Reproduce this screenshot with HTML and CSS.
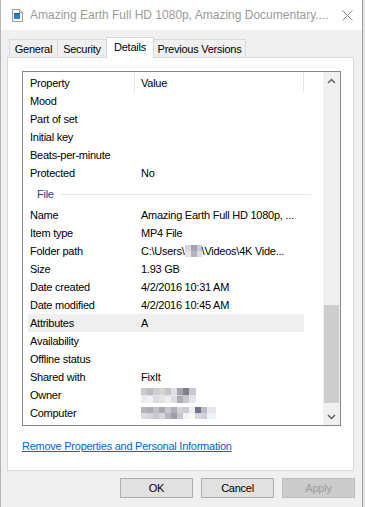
FILE: index.html
```html
<!DOCTYPE html>
<html lang="en">
<head>
  <meta charset="UTF-8" />
  <meta name="viewport" content="width=device-width, initial-scale=1.0"/>
  <title>Properties</title>
  <link rel="stylesheet" href="styles.css">
</head>
<body>

  <div class="window">

    <!-- Title bar -->
    <div class="titlebar">
      <svg class="file-icon" width="11" height="13" viewBox="0 0 11 13">
        <path d="M0.5 0.5 H7.5 L10.5 3.5 V12.5 H0.5 Z" fill="#fff" stroke="#9a9a9a"/>
        <path d="M7.5 0.5 V3.5 H10.5" fill="none" stroke="#9a9a9a"/>
        <rect x="2" y="4" width="6" height="6" fill="#2b7cd3"/>
        <rect x="2" y="4" width="6" height="1.5" fill="#1a5ea8"/>
      </svg>
      <span class="title-text">Amazing Earth Full HD 1080p, Amazing Documentary....</span>
      <svg class="close-icon" width="11" height="11" viewBox="0 0 11 11">
        <path d="M0.5 0.5 L10.5 10.5 M10.5 0.5 L0.5 10.5" stroke="#8a8a8a" stroke-width="1"/>
      </svg>
    </div>

    <div class="body-area">

      <!-- Tabs -->
      <div class="tabs">
        <div class="tab tab-general">General</div>
        <div class="tab tab-security">Security</div>
        <div class="tab tab-details active">Details</div>
        <div class="tab tab-prev">Previous Versions</div>
      </div>

      <!-- Tab page -->
      <div class="panel">
        <div class="listbox">
          <div class="list-content">
            <div class="list-header">
              <div class="hcell hcell-prop">Property</div>
              <div class="hcell hcell-value">Value</div>
            </div>

            <div class="row"><span class="prop">Mood</span><span class="val"></span></div>
            <div class="row"><span class="prop">Part of set</span><span class="val"></span></div>
            <div class="row"><span class="prop">Initial key</span><span class="val"></span></div>
            <div class="row"><span class="prop">Beats-per-minute</span><span class="val"></span></div>
            <div class="row"><span class="prop">Protected</span><span class="val">No</span></div>

            <div class="group-header">
              <span class="group-name">File</span>
              <span class="group-line"></span>
            </div>

            <div class="row"><span class="prop">Name</span><span class="val">Amazing Earth Full HD 1080p, ...</span></div>
            <div class="row"><span class="prop">Item type</span><span class="val">MP4 File</span></div>
            <div class="row"><span class="prop">Folder path</span><span class="val">C:\Users\<span class="blur blur-user"></span>\Videos\4K Vide...</span></div>
            <div class="row"><span class="prop">Size</span><span class="val">1.93 GB</span></div>
            <div class="row"><span class="prop">Date created</span><span class="val">4/2/2016 10:31 AM</span></div>
            <div class="row"><span class="prop">Date modified</span><span class="val">4/2/2016 10:45 AM</span></div>
            <div class="row hover"><span class="prop">Attributes</span><span class="val">A</span></div>
            <div class="row"><span class="prop">Availability</span><span class="val"></span></div>
            <div class="row"><span class="prop">Offline status</span><span class="val"></span></div>
            <div class="row"><span class="prop">Shared with</span><span class="val">FixIt</span></div>
            <div class="row"><span class="prop">Owner</span><span class="val"><span class="blur blur-owner"></span></span></div>
            <div class="row"><span class="prop">Computer</span><span class="val"><span class="blur blur-computer"></span></span></div>
          </div>

          <!-- Vertical scrollbar -->
          <div class="scrollbar">
            <div class="sb-button">
              <svg width="9" height="6" viewBox="0 0 9 6"><path d="M1 5 L4.5 1.5 L8 5" fill="none" stroke="#606060" stroke-width="1.5"/></svg>
            </div>
            <div class="sb-track">
              <div class="sb-thumb"></div>
            </div>
            <div class="sb-button">
              <svg width="9" height="6" viewBox="0 0 9 6"><path d="M1 1 L4.5 4.5 L8 1" fill="none" stroke="#606060" stroke-width="1.5"/></svg>
            </div>
          </div>
        </div>

        <a href="#" class="remove-link">Remove Properties and Personal Information</a>
      </div>

      <!-- Dialog buttons -->
      <div class="buttons">
        <button class="btn">OK</button>
        <button class="btn">Cancel</button>
        <button class="btn disabled">Apply</button>
      </div>

    </div>
  </div>

</body>
</html>
```

FILE: styles.css
```css
/* Whole page */
body {
  margin: 0;
  padding: 0;
  background-color: #e6e6e6;
  font-family: "Liberation Sans", Arial, sans-serif;
  font-size: 11px;
  letter-spacing: -0.25px;
  color: black;
}

/* Dialog window */
.window {
  width: 363px;
  height: 507px;
  box-sizing: border-box;
  border-left: 1px solid #b4b4b4;
  border-right: 1px solid #9c9c9c;
  background-color: #f0f0f0;
  display: flex;
  flex-direction: column;
}

/* Title bar */
.titlebar {
  height: 30px;
  background-color: white;
  display: flex;
  align-items: center;
  padding-left: 11px;
}

.file-icon {
  flex-shrink: 0;
}

.title-text {
  margin-left: 7px;
  font-size: 12px;
  color: #9a9a9a;
  white-space: nowrap;
  letter-spacing: 0;
}

.close-icon {
  margin-left: auto;
  margin-right: 9px;
  flex-shrink: 0;
}

/* Area below the title bar */
.body-area {
  padding-top: 7px;
}

/* Tabs */
.tabs {
  display: flex;
  align-items: flex-end;
  height: 20px;
  padding-left: 8px;
}

.tab {
  box-sizing: border-box;
  height: 18px;
  border: 1px solid #d9d9d9;
  border-bottom: none;
  margin-left: -1px;
  display: flex;
  align-items: center;
  justify-content: center;
  background-color: #f0f0f0;
}

.tab:first-child {
  margin-left: 0;
}

.tab-general { width: 49px; }
.tab-security { width: 50px; }
.tab-details { width: 48px; }
.tab-prev { width: 93px; }

.tab.active {
  height: 21px;
  margin-bottom: -1px;
  background-color: white;
  position: relative;
  padding-bottom: 2px;
}

/* Tab page */
.panel {
  margin-left: 6px;
  width: 347px;
  height: 414px;
  box-sizing: border-box;
  border: 1px solid #d9d9d9;
  background-color: white;
  padding: 13px 0 0 14px;
}

/* Property list */
.listbox {
  width: 319px;
  height: 355px;
  box-sizing: border-box;
  border: 1px solid #828790;
  display: flex;
}

.list-content {
  flex: 1;
  padding-left: 5px;
  overflow: hidden;
}

.list-header {
  display: flex;
  height: 20px;
  width: 276px;
}

.hcell {
  box-sizing: border-box;
  border-right: 1px solid #e5e5e5;
  padding-top: 3px;
  line-height: 17px;
}

.hcell-prop {
  width: 107px;
  padding-left: 2px;
}

.hcell-value {
  width: 169px;
  padding-left: 6px;
}

.row {
  display: grid;
  grid-template-columns: 107px 1fr;
  width: 276px;
  height: 18px;
  line-height: 18px;
  white-space: nowrap;
}

.row.hover {
  background-color: #efefef;
}

.prop {
  padding-left: 2px;
}

.val {
  padding-left: 6px;
  overflow: hidden;
}

/* Group header with line */
.group-header {
  display: flex;
  align-items: center;
  width: 283px;
  height: 24px;
  padding-left: 9px;
  box-sizing: border-box;
}

.group-name {
  color: #1e3c8c;
}

.group-line {
  flex: 1;
  height: 1px;
  margin-left: 6px;
  background-color: #e2e6f0;
}

/* Blurred personal info */
.blur {
  display: inline-block;
  vertical-align: middle;
  background-repeat: no-repeat;
  background-size: 100% 50%;
  background-position: top, bottom;
}

.blur-user {
  width: 17px;
  height: 12px;
  margin-top: -2px;
  background-image:
    linear-gradient(to right, #d6d6dc 0 6px, #a4a4b0 6px 12px, #c8c8d0 12px),
    linear-gradient(to right, #e6e6ea 0 6px, #b4b4c0 6px 12px, #dcdce2 12px);
}

.blur-owner {
  width: 55px;
  height: 15px;
  margin-top: -1px;
  background-image:
    linear-gradient(to right, #cacace 0 6px, #bcbcc2 6px 12px, #cdcdd2 12px 18px, #d4d4d4 18px 24px, #c4c4cc 24px 30px, #e0e0e2 30px 36px, #a4a4ac 36px 42px, #80808c 42px 48px, #c8c8d2 48px),
    linear-gradient(to right, #ececef 0 6px, #f2f2f2 6px 12px, #dcdce0 12px 18px, #e4e4e4 18px 24px, #eeeef2 24px 30px, #dadadf 30px 36px, #acacb4 36px 42px, #c8c8cc 42px 48px, #e4e4ea 48px);
}

.blur-computer {
  width: 75px;
  height: 12px;
  margin-top: -2px;
  background-image:
    linear-gradient(to right, #b4b4bc 0 6px, #acacb4 6px 12px, #c0c0c6 12px 18px, #a8a8b0 18px 24px, #c8c8ce 24px 30px, #b0b0b8 30px 36px, #d4d4d8 36px 42px, #ccccd2 42px 48px, #f0f0f4 48px 54px, #727286 54px 60px, #bcbcc4 60px 66px, #e6e6ea 66px),
    linear-gradient(to right, #dcdce0 0 6px, #d2d2d8 6px 12px, #c8c8d0 12px 18px, #d6d6da 18px 24px, #b8b8c0 24px 30px, #9c9cac 30px 36px, #c6c6cc 36px 42px, #f2f2f4 42px 48px, #fafaf0 48px 54px, #d6d6e0 54px 60px, #cfcfd6 60px 66px, #eaf2fa 66px);
}

/* Scrollbar */
.scrollbar {
  width: 17px;
  background-color: #f0f0f0;
  display: flex;
  flex-direction: column;
}

.sb-button {
  height: 17px;
  display: flex;
  align-items: center;
  justify-content: center;
}

.sb-track {
  flex: 1;
  display: flex;
  flex-direction: column;
  justify-content: flex-end;
}

.sb-thumb {
  height: 98px;
  margin: 0 1px 5px 1px;
  background-color: #cdcdcd;
}

/* Link under the list */
.remove-link {
  display: inline-block;
  margin-top: 13px;
  line-height: 14px;
  color: #0066cc;
  text-decoration: underline;
}

/* OK / Cancel / Apply */
.buttons {
  display: flex;
  justify-content: flex-end;
  gap: 8px;
  margin-top: 7px;
  padding-right: 7px;
}

.btn {
  width: 73px;
  height: 20px;
  box-sizing: border-box;
  border: 1px solid #adadad;
  background-color: #e1e1e1;
  font-family: "Liberation Sans", Arial, sans-serif;
  font-size: 11px;
  letter-spacing: -0.25px;
  color: black;
  padding: 0;
}

.btn.disabled {
  background-color: #cccccc;
  border-color: #bfbfbf;
  color: #9c9c9c;
}
```
